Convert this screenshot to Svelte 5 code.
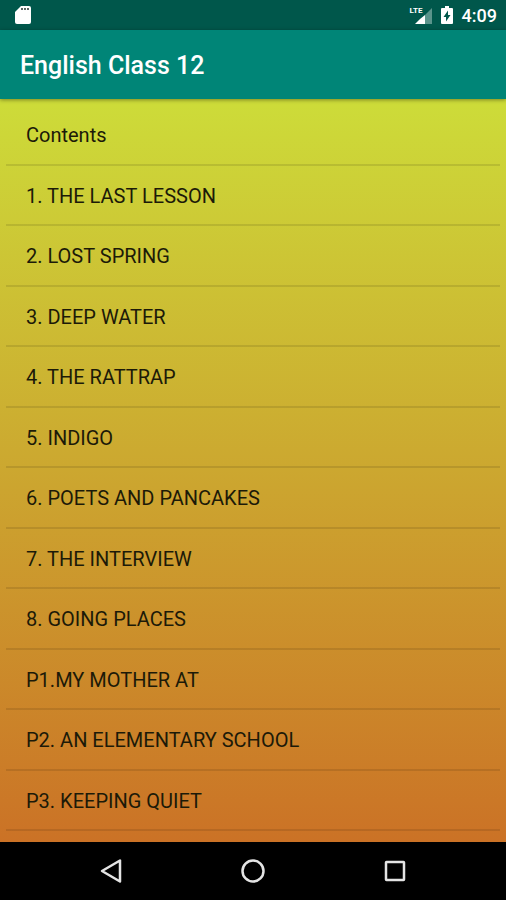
<script>
    let title = "English Class 12";
    let time = "4:09";
    let chapters = [
        "Contents",
        "1. THE LAST LESSON",
        "2. LOST SPRING",
        "3. DEEP WATER",
        "4. THE RATTRAP",
        "5. INDIGO",
        "6. POETS AND PANCAKES",
        "7. THE INTERVIEW",
        "8. GOING PLACES",
        "P1.MY MOTHER AT",
        "P2. AN ELEMENTARY SCHOOL",
        "P3. KEEPING QUIET"
    ];
</script>

<div class="screen">
    <div class="status-bar">
        <svg width="16" height="20" viewBox="0 0 16 20" aria-hidden="true">
            <path fill="#fff" d="M6 1h8a2 2 0 0 1 2 2v14a2 2 0 0 1-2 2H2a2 2 0 0 1-2-2V7z" />
            <path fill="#5d6664" d="M6 3h2v2H6zM9 3h2v2H9zM12 3h2v2h-2z" />
        </svg>
        <div class="status-right">
            <div class="signal">
                <svg width="22" height="20" viewBox="0 0 22 20" aria-hidden="true">
                    <path fill="#5a948b" d="M22 3v16h-7v-9z" />
                    <path fill="#fff" d="M15 10v9H5l5-5z" />
                </svg>
                <span class="lte">LTE</span>
            </div>
            <svg width="12" height="20" viewBox="0 0 12 20" aria-hidden="true">
                <path fill="#fff" d="M4 1h4v2h3a1 1 0 0 1 1 1v14a1 1 0 0 1-1 1H1a1 1 0 0 1-1-1V4a1 1 0 0 1 1-1h3z" />
                <path fill="#00574b" d="M7 5.500 2.500 12H5v4.500L9.500 10H7z" />
            </svg>
            <span class="time">{time}</span>
        </div>
    </div>

    <header class="app-bar">
        <h1>{title}</h1>
    </header>

    <ul class="chapters">
        {#each chapters as chapter}
            <li><button type="button">{chapter}</button></li>
        {/each}
    </ul>

    <nav class="nav-bar">
        <button type="button" aria-label="Back">
            <svg width="24" height="26" viewBox="0 0 24 26">
                <path d="M21 2.500v21L3 13z" />
            </svg>
        </button>
        <button type="button" aria-label="Home">
            <svg width="26" height="26" viewBox="0 0 26 26">
                <circle cx="13" cy="13" r="10.500" />
            </svg>
        </button>
        <button type="button" aria-label="Recent apps">
            <svg width="24" height="26" viewBox="0 0 24 26">
                <rect x="3" y="4" width="18" height="18" rx="0.500" />
            </svg>
        </button>
    </nav>
</div>

<style>
    :global(body) {
        margin: 0;
        background: #000;
    }

    .screen {
        display: flex;
        flex-direction: column;
        min-height: 100vh;
        font-family: Roboto, "Noto Sans", sans-serif;
    }

    .status-bar {
        display: flex;
        align-items: center;
        justify-content: space-between;
        height: 30px;
        padding: 0 9px 0 15px;
        background: #00574b;
        color: #fff;
    }

    .status-right {
        display: flex;
        align-items: center;
        gap: 9px;
    }

    .signal {
        position: relative;
        display: flex;
    }

    .lte {
        position: absolute;
        top: 2px;
        left: 0;
        font-size: 8px;
        font-weight: 700;
        line-height: 8px;
    }

    .time {
        padding-top: 2px;
        font-size: 18px;
        font-weight: 500;
        line-height: 24px;
    }

    .app-bar {
        position: relative;
        display: flex;
        align-items: center;
        height: 66px;
        padding: 3px 20px 0;
        background: #008577;
        color: #fff;
        box-shadow: 0 1px 4px rgba(0, 0, 0, 0.4);
    }

    h1 {
        margin: 0;
        font-size: 25px;
        font-weight: 500;
        line-height: 32px;
    }

    .chapters {
        display: grid;
        flex: 1;
        grid-auto-rows: minmax(60px, 1fr);
        margin: 0;
        padding: 6px 6px 11px;
        background: linear-gradient(#cddc39, #cb7226);
        list-style: none;
    }

    li {
        display: flex;
        border-bottom: 2px solid rgba(0, 0, 0, 0.1);
    }

    li button {
        flex: 1;
        padding: 2px 20px 0;
        border: 0;
        background: none;
        color: #1c1a08;
        font-family: inherit;
        font-size: 20px;
        line-height: 24px;
        text-align: left;
    }

    .nav-bar {
        display: grid;
        grid-template-columns: repeat(3, 1fr);
        height: 58px;
        padding: 0 40px;
        background: #000;
    }

    .nav-bar button {
        display: flex;
        align-items: center;
        justify-content: center;
        padding: 0;
        border: 0;
        background: none;
    }

    .nav-bar svg {
        fill: none;
        stroke: #e4e4e4;
        stroke-width: 2.500;
        stroke-linejoin: round;
    }
</style>
